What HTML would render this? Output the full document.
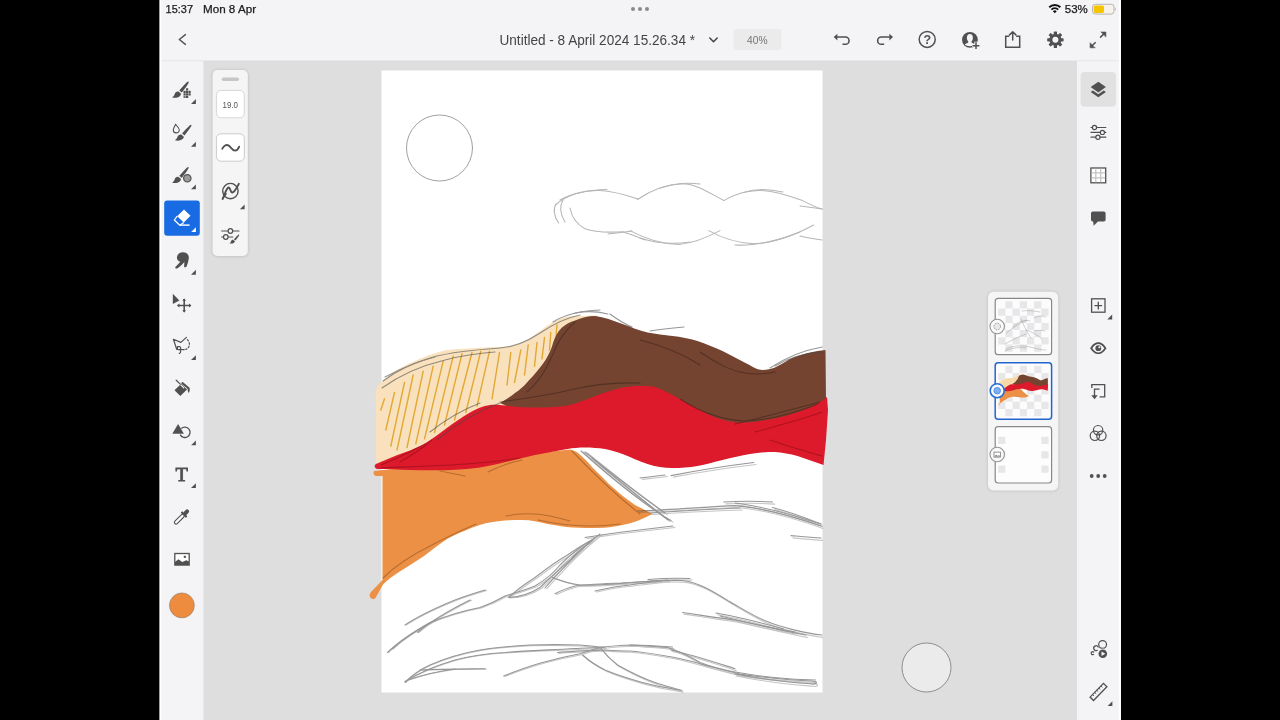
<!DOCTYPE html>
<html lang="en">
<head>
<meta charset="utf-8">
<title>Untitled - 8 April 2024 15.26.34</title>
<style>
html,body{margin:0;padding:0;background:#000;width:1280px;height:720px;overflow:hidden}
svg{display:block;position:absolute;left:0;top:0}
text{font-family:"Liberation Sans",sans-serif}
</style>
</head>
<body>
<svg width="1280" height="720" viewBox="0 0 1280 720">
<defs>
<filter id="sh" x="-20%" y="-20%" width="140%" height="140%"><feGaussianBlur stdDeviation="1.5"/></filter>
<clipPath id="cv"><rect x="381.5" y="70.5" width="441.5" height="622"/></clipPath>
</defs>
<!-- app background -->
<rect x="159.700" y="0" width="961.200" height="720" fill="#dedede"/>
<!-- CANVAS -->
<g id="canvas">
<rect x="381.5" y="70.5" width="441" height="622" fill="#fff"/>
<g id="art">
<!-- cream -->
<path d="M375.800,392 C376.500,387 379,384 382,381.500 C392,373 401,366.500 412,362.500 C422,357.500 434,353 447,350 C457,349 470,348.500 485,347.500 C497,347 506,347 515,345 C523,342 529,339 535,335 C541,331 546,326 552.500,322.500 C560,318 567,316.500 575,316 L598,315.500 L600,330 L520,400 L380,466 L376,462 Z" fill="#f8e1bc"/>
<!-- hatch -->
<g stroke="#e0a62c" stroke-width="1.400" fill="none" stroke-linecap="round" opacity=".95">
<path d="M384.5,398.8 L380.8,410.0"/><path d="M394.5,392.5 L385.8,430.0"/><path d="M404.5,382.5 L390.8,446.2"/><path d="M413.2,375.0 L397.0,450.0"/><path d="M423.2,371.2 L407.0,447.5"/><path d="M433.2,366.2 L415.8,443.8"/><path d="M443.2,361.2 L424.5,438.8"/><path d="M453.2,356.2 L434.5,432.5"/><path d="M462.0,353.8 L444.5,425.0"/><path d="M472.0,352.5 L454.5,420.0"/><path d="M480.8,351.2 L465.8,412.5"/><path d="M489.5,351.2 L477.0,406.2"/><path d="M499.5,352.5 L492.0,398.8"/><path d="M510.8,352.5 L507.0,385.0"/><path d="M520.8,350.0 L514.5,382.5"/><path d="M528.2,345.0 L524.5,375.0"/><path d="M537.0,342.5 L534.5,366.2"/><path d="M544.5,337.5 L542.0,358.8"/><path d="M550.8,332.5 L549.5,350.0"/><path d="M557.0,325.0 L555.8,340.0"/>
</g>
<!-- orange -->
<path d="M374.500,471 L383,470 L570,449.500 C573,450 575,451 577.500,452.500 C583,457 588,462 592.500,467.500 C598,473 604,479 610,485 C618,492 626,499 635,505 C641,508 647,511 652.500,514 C643,519 633,523 622.500,525 C614,527 606,528 597.500,528 C589,528 581,528 572.500,527.500 C564,527 556,525 547.500,524 C539,522 531,520 522.500,520 C515,520 507,520 500,521 C490,522 481,524 472.500,527.500 C464,531 455,534.500 447.500,538.750 C439,544 431,551 423.750,556.250 C415,562 406,567.500 397.500,573 C392,576.500 387,580.500 383,584.500 L375.500,598 C374,600 371,599 370,597 C369,595 370,593 372,591 L382.500,580 L382.500,476 L376,476 C373,476 373,471 374.500,471 Z" fill="#ec9045"/>
<!-- brown -->
<path d="M595,316 C604,317 613,320.500 622.500,324 C631,327 639,330.500 647.500,332.500 C656,334 664,335 672.500,336 C681,337 689,338.500 697.500,341 C706,344 714,347 722.500,351 C731,355 739,360 747.500,364 C753,367 758,370 762.500,370 C767,370 771,369 775,367.500 C780,365 785,362 790,359 C797,356 803,354 810,352.500 C815,351.500 820,350.500 825.500,350 L826,399 L810,430 L560,430 L500,403 C505,400 510,397 515,393 C520,389.500 524,386 527,382.500 C532,377 535,374 538,370 C542,365 545,361 547,357.500 C550,352 552,347 553,343 C555,337 558,331 562,327.500 C566,324 570,322 575,320.500 C581,318 588,316 595,316 Z" fill="#744431"/>
<!-- red -->
<path d="M376,464 C383,461 390,458 397.500,455 C406,452 414,449 422.500,445 C431,440 439,434 447.500,427.500 C455,422 462,417 470,412.500 C476,409 483,406 490,405 C497,404.500 503,405.500 510,406 C518,407 526,407.500 535,407.500 C545,407.500 555,407.500 565,406 C572,405 578,402 585,400 C593,397 601,393.500 610,391 C618,388.500 626,386.500 635,386 L650,386 C656,387 662,389.500 667.500,392.500 C672,394.500 676,397 680,399 C687,403 693,407 700,410 C707,414 713,417 720,419 C727,421 733,422.500 740,422.500 C747,422.500 753,422 760,421 C769,420 777,418 785,416 C794,413.500 802,410.500 810,407.500 C816,405 822,401 827,397 L828,410 L826,440 L823.500,465 C815,462 806,459 797.500,456 C790,454 782,452.500 775,452 C767,452 758,452.500 750,454 C741,455.500 732,457.500 722.500,460 C714,462 706,464.500 697.500,466 C689,467.500 681,468 672.500,468 C664,468 655,466.500 647.500,464 C639,461 631,457.500 622.500,454 C617,452 611,450 605,449 C598,448 592,447.500 585,447.500 C579,447.500 573,448 567.500,449 C556,451 546,453 535,455 C522,458 510,461 497.500,464 C485,467 472,469 460,469.500 C443,470.500 427,470.500 410,470 C399,469.500 387,469 378,469 C374,469 374,465 376,464 Z" fill="#dc1a2b"/>
</g>
<g id="sketch" fill="none" stroke="#4a4a4a" stroke-width="1.100" stroke-linecap="round" opacity=".58" clip-path="url(#cv)">
<!-- sun -->
<circle cx="439.500" cy="148" r="33" stroke-width="0.9"/>
<!-- cloud -->
<g opacity=".7" stroke-width="1.050">
<path d="M555.500,205 C566,195 584,190 600,190.500 C614,191 626,195 638,199"/>
<path d="M560,200 C572,193 588,190 607,189.500"/>
<path d="M637.500,199.500 C650,191 666,184.500 682.500,183.800 C697,184 711,194 724,200.600"/>
<path d="M660,188 C672,184 686,182 700,184"/>
<path d="M723.700,200.600 C735,194 748,190 761,190.500 C775,191 790,196 802.500,200.600 C809,204 815,207 822,209"/>
<path d="M745,192 C757,188 770,189 783,192"/>
<path d="M800,206 C808,207 815,208 822,209"/>
<path d="M558.700,223 C554,217 553,209 556,204"/>
<path d="M565,222 C560,214 559,207 563,200"/>
<path d="M570,208 C572,218 578,225 585,228.700 C597,233 610,232.500 622.500,231.700 C631,234 638,237 645,240"/>
<path d="M608,234 C617,233 625,232 632,231"/>
<path d="M630,230.600 C642,237 660,244 678.700,244.500 C694,243 708,237 720,230.600"/>
<path d="M640,238 C655,243 670,245 690,242"/>
<path d="M708.700,230.600 C722,238 738,243 753.700,243.700 C775,243 797,234 813.700,225"/>
<path d="M735,245 C755,246 780,240 800,232"/>
<path d="M800,236 C808,238 815,239 822,240"/>
</g>
<!-- outline along cream / brown top -->
<path d="M383,381 C395,372 410,364 430,358 C450,352 475,350 500,348 C515,347 528,341 540,333 C552,325 565,318 580,315"/>
<path d="M382,388 C400,375 420,366 445,360 C460,356 480,353 495,352"/>
<path d="M385,377 C400,369 415,362 435,357"/>
<path d="M553,322 C565,314 580,311 600,310"/>
<path d="M575,313 C590,310 600,312 608,314"/>
<path d="M527,392 C538,383 546,370 552,356 C557,343 563,332 575,322" stroke="#3a2a22"/>
<path d="M610,314 C618,320 625,324 632,327"/>
<path d="M650,331 C662,329 673,328 684,327"/>
<path d="M770,368 C785,358 800,351 822,347"/>
<path d="M775,366 C790,357 806,353 822,352"/>
<path d="M437,440 C455,425 475,412 500,403"/>
<path d="M430,432 C445,420 462,410 480,403"/>
<!-- lines inside shapes (darker) -->
<g stroke="#2b1a14" opacity=".75">
<path d="M500,402 C520,399 545,396 570,390 C590,385 610,382 640,383"/>
<path d="M680,399 C700,412 720,420 745,421 C770,420 795,413 818,404"/>
<path d="M700,352 C715,362 728,370 745,373 C755,375 765,374 775,372"/>
<path d="M640,340 C660,345 680,352 700,365"/>
<path d="M735,424 C760,418 790,410 820,402"/>
</g>
<g stroke="#7a0d16" opacity=".8">
<path d="M378,466 C395,460 410,452 425,444"/>
<path d="M400,462 C412,455 424,447 432,440"/>
<path d="M755,432 C780,425 800,420 822,412"/>
<path d="M770,440 C790,447 808,452 822,456"/>
<path d="M378,468 C420,466 470,466 520,458"/>
</g>
<g stroke="#7a4418" opacity=".8">
<path d="M383,578 C395,566 410,556 430,546 C445,538 460,531 476,524"/>
<path d="M506,516 C520,513 535,513 550,516 C560,518 565,520 570,521"/>
<path d="M538,520 C560,525 590,528 620,524"/>
<path d="M572,451 C590,470 612,492 640,514"/>
<path d="M440,471 C450,473 458,475 465,476"/>
<path d="M488,472 C500,466 512,462 522,460"/>
</g>
<g id="skb">
<!-- ridge from orange tip -->
<path d="M581,451 C600,468 625,490 656,511 C661,515 666,518 671,520.600"/>
<path d="M585,452 C610,472 635,492 665,513"/>
<path d="M592,458 C615,478 640,498 668,520"/>
<path d="M671,475.600 C700,470 725,466 753.700,462.500"/>
<path d="M640,478 C650,477 658,476 665,475"/>
<path d="M637.500,511 C670,510 705,507 735,505.600 C765,508 795,517 821,526"/>
<path d="M650,513 C680,511 710,509 740,508"/>
<path d="M723.700,502 C740,501 756,501 772.500,502"/>
<path d="M735,503 C760,506 790,514 821,524"/>
<path d="M772.500,507.500 C790,512 806,518 821,524"/>
<path d="M791,535.600 C801,536.500 811,537.500 821,538"/>
<!-- long loops -->
<path d="M673,526 C655,528 638,530 622.500,532 C608,534 596,536 585,537.500"/>
<path d="M508.750,597.500 C516,590 525,584 535,577.500 C546,569 557,561 567.500,555 C576,549 584,544 592.500,540 C584,547 576,553 570,560 C560,569 550,578 540,587.500 C530,594 520,597 508.750,597.500 Z"/>
<path d="M600,534 C588,543 578,553 568,563 C560,572 552,580 545,588"/>
<path d="M387.500,652.500 C400,640 415,631 430,622.500 C446,616 462,611 480,607.500 C490,604 498,600 505,596 C515,593 525,590 535,586 C545,580 553,574 560,565 C570,555 580,546 595,538"/>
<path d="M405,625 C420,615 438,607 455,600 C465,596 475,593 485,590"/>
<path d="M417.500,632.500 C432,620 450,610 470,600"/>
<path d="M392,649 C405,637 420,628 436,620"/>
<path d="M552.500,577.500 C561,581 570,583.500 580,585 C598,585.500 615,584 632,582.500 C652,581 668,580 682,580.500 C698,582 714,592 728,600.700 C741,608 752,615 764.500,620.600 C775,625 784,627.500 793,629.600 C803,632 812,634 822,635"/>
<path d="M555,593.750 C562,590 568,588 575,586 C590,584 606,583.500 622,583 C640,582 655,581 668,580"/>
<path d="M595,591 C607,588 618,586 630,585 C642,583 652,582 662,581"/>
<path d="M648,579.500 C660,578.500 675,578 690,578.500"/>
<path d="M682.500,612.500 C700,615 718,618 735,620 C760,625 783,631 806,635"/>
<path d="M716,613 C740,617 762,623 783.700,629"/>
<path d="M720,616 C745,622 770,628 795,632"/>
<!-- bottom loops -->
<path d="M405,682.500 C412,675 421,669 430,665 C446,658 463,653 480,650 C497,647 513,646 530,645 C547,644.500 563,644.500 580,645 C588,645.500 597,646.500 605,647.500"/>
<path d="M405,681.500 C420,672 438,665 455,660 C470,656 488,653.500 505,652.500 C528,650.500 550,650 575,648.500 C585,648 593,647.500 600,647.500 C610,646 620,645.500 630,645 C645,645 660,646 672.500,647"/>
<path d="M408,680 C425,674 440,671 455,669"/>
<path d="M420,670 C442,669 463,669 485,668.750"/>
<path d="M503.750,676 C516,671 530,666 542.500,662.500 C555,659 568,656 580,653.750 C588,651 595,649 602,647"/>
<path d="M557.500,652.500 C573,651 590,650.500 605,650 C613,650.500 622,651 630,651 C643,652 655,654 667.500,656.250 C680,658 690,661 700,663.750 C715,668 728,671 740,674 C765,678 790,680 812,681 C820,682 816,685 810,683.700 C785,682 760,679 735,674"/>
<path d="M582.500,655 C589,661 597,666 605,670 C617,675 630,679 642.500,682.500 C655,686 668,688.500 680,690"/>
<path d="M600,647.500 C605,654 611,660 617.500,665 C630,672 642,678 655,682.500 C662,685 670,687 682,690.500"/>
<path d="M630,645 C643,645.500 655,646.500 667.500,647.500 C680,651 690,657 700,662.500 C712,667 724,670 735,672 C762,677 790,679.500 815.600,680"/>
<path d="M671,650 C693,655 714,662 735,668.700"/>
</g>
<use href="#skb" transform="translate(1.6,1.1) rotate(0.35 600 600)" opacity=".55"/>
</g>

</g>
<!-- top bar -->
<rect x="159.700" y="0" width="961.200" height="61" fill="#f4f4f6"/>
<rect x="159.700" y="60.400" width="961.200" height="1" fill="#dcdcde" opacity=".7"/>
<!-- left toolbar -->
<rect x="159.700" y="61.200" width="43.700" height="659" fill="#f4f4f6"/>
<rect x="159.700" y="0" width="1.700" height="720" fill="#fff"/>
<!-- right toolbar -->
<rect x="1077" y="61.200" width="43.900" height="659" fill="#f4f4f6"/>
<rect x="1118.900" y="0" width="2" height="720" fill="#fff"/>
<!-- ===== status bar ===== -->
<g id="status" fill="#1a1a1a">
<text x="165.600" y="12.600" font-size="11" textLength="27.400" lengthAdjust="spacingAndGlyphs" stroke="#1a1a1a" stroke-width=".25">15:37</text>
<text x="203" y="12.600" font-size="11" textLength="53" lengthAdjust="spacingAndGlyphs" stroke="#1a1a1a" stroke-width=".25">Mon 8 Apr</text>
<circle cx="633" cy="9" r="2" fill="#8a8a8c"/><circle cx="640" cy="9" r="2" fill="#8a8a8c"/><circle cx="647" cy="9" r="2" fill="#8a8a8c"/>
<!-- wifi -->
<g fill="none" stroke="#111" stroke-width="1.900" stroke-linecap="butt">
<path d="M1049.200,7.300 A8,8 0 0 1 1060.400,7.300"/>
<path d="M1051.400,9.600 A4.900,4.900 0 0 1 1058.200,9.600"/>
</g>
<path d="M1054.800,13.200 L1052.900,11.300 A2.700,2.700 0 0 1 1056.700,11.300 Z" fill="#111"/>
<text x="1064.800" y="12.600" font-size="11" textLength="23" lengthAdjust="spacingAndGlyphs" stroke="#1a1a1a" stroke-width=".25">53%</text>
<!-- battery -->
<rect x="1092.500" y="4.300" width="21.500" height="9.800" rx="2.800" fill="#f8f3ea" stroke="#b5b5b5" stroke-width="1"/>
<rect x="1093.700" y="5.500" width="10.300" height="7.400" rx="1.600" fill="#f7c400"/>
<path d="M1114.800,7.600 C1116.200,8 1116.200,10.400 1114.800,10.800 Z" fill="#b5b5b5"/>
</g>
<!-- ===== title bar ===== -->
<g id="titlebar">
<path d="M185.400,34.600 L179.300,39.500 L185.400,44.400" fill="none" stroke="#555" stroke-width="1.500" stroke-linecap="round" stroke-linejoin="round"/>
<text x="499.500" y="45.300" font-size="13.900" fill="#444" textLength="195.500" lengthAdjust="spacingAndGlyphs">Untitled - 8 April 2024 15.26.34 *</text>
<path d="M709.800,38 L713.500,41.800 L717.200,38" fill="none" stroke="#444" stroke-width="1.500" stroke-linecap="round" stroke-linejoin="round"/>
<rect x="733.500" y="29" width="48" height="21" rx="3.500" fill="#ebebeb"/>
<text x="757.300" y="44" font-size="10.500" fill="#757575" text-anchor="middle" textLength="20.500" lengthAdjust="spacingAndGlyphs">40%</text>
</g>
<g id="topicons" fill="none" stroke="#505050" stroke-width="1.500" stroke-linecap="round" stroke-linejoin="round">
<!-- undo -->
<path d="M837,37 L845.400,37 A3.650,3.650 0 0 1 845.400,44.300 L842.500,44.300" stroke-width="1.600" stroke-linecap="butt"/>
<path d="M833.700,37.100 L837.400,33.700 L837.400,40.500 Z" fill="#505050" stroke="none"/>
<!-- redo -->
<path d="M889.700,37 L881.300,37 A3.650,3.650 0 0 0 881.300,44.300 L884.200,44.300" stroke-width="1.600" stroke-linecap="butt"/>
<path d="M893,37.100 L889.300,33.700 L889.300,40.500 Z" fill="#505050" stroke="none"/>
<!-- help -->
<circle cx="927.200" cy="39.400" r="8"/>
<!-- share -->
<path d="M1009.200,36.200 L1005.700,36.200 L1005.700,47.200 L1019.700,47.200 L1019.700,36.200 L1016.200,36.200" stroke-linecap="butt" stroke-linejoin="miter"/>
<path d="M1012.700,40 L1012.700,32.200 M1009.500,34.900 L1012.700,31.700 L1015.900,34.900"/>
<!-- fullscreen -->
<path d="M1100.100,37.600 L1104,33.800" stroke-linecap="butt"/>
<path d="M1095.700,42.200 L1091.800,46" stroke-linecap="butt"/>
<path d="M1101.200,32 L1105.900,32 L1105.900,36.700 Z M1090.100,43.100 L1090.100,47.800 L1094.800,47.800 Z" fill="#505050" stroke-width=".6"/>
</g>
<text x="927.200" y="43.900" font-size="12.500" font-weight="bold" fill="#505050" text-anchor="middle">?</text>
<!-- user+ -->
<g id="userplus">
<circle cx="969.900" cy="39.800" r="7.900" fill="#505050"/>
<path d="M969.900,34 C971.800,34 972.900,35.700 972.900,37.800 C972.900,39.400 972.300,40.700 971.500,41.500 C971.400,42.300 971.700,42.800 972.400,43.100 C973.600,43.500 974.500,44 975.100,44.600 C973.800,45.800 972,46.300 969.900,46.300 C967.800,46.300 966,45.800 964.700,44.600 C965.300,44 966.200,43.500 967.400,43.100 C968.100,42.800 968.400,42.300 968.300,41.500 C967.500,40.700 966.900,39.400 966.900,37.800 C966.900,35.700 968,34 969.900,34 Z" fill="#f4f4f6"/>
<path d="M976,41.800 L976,49.400 M972.200,45.650 L979.800,45.650" stroke="#f4f4f6" stroke-width="3.400" fill="none" stroke-linecap="butt"/>
<path d="M976,42.300 L976,49.100 M972.600,45.650 L979.400,45.650" stroke="#505050" stroke-width="1.500" fill="none" stroke-linecap="butt"/>
</g>
<!-- gear -->
<g id="gear" transform="translate(1055.400,39.800)">
<g fill="#505050">
<rect x="-1.600" y="-8.200" width="3.200" height="16.400" rx=".6"/>
<rect x="-1.600" y="-8.200" width="3.200" height="16.400" rx=".6" transform="rotate(45)"/>
<rect x="-1.600" y="-8.200" width="3.200" height="16.400" rx=".6" transform="rotate(90)"/>
<rect x="-1.600" y="-8.200" width="3.200" height="16.400" rx=".6" transform="rotate(135)"/>
<circle r="6"/>
</g>
<circle r="3" fill="#f4f4f6"/>
</g>

<g id="lefticons" fill="#505050">
<!-- 1 pixel brush -->
<path d="M188.200,81.600 C186.800,81.800 181.700,87.800 179.300,90.500 L181.800,92.600 C184,89.700 188.700,83.700 188.700,82.200 C188.700,81.800 188.500,81.600 188.200,81.600 Z"/>
<path d="M178.500,91.600 C176.500,91.300 175.200,92.400 174.600,94.200 C174.200,95.600 173.400,96.700 172.100,97.400 C174.500,98 177.700,97.900 179.500,96.400 C180.900,95.200 181.200,93.900 180.800,93.500 Z"/>
<g>
<rect x="186" y="88.300" width="2.200" height="2.200"/><rect x="183.500" y="90.800" width="2.200" height="2.200"/><rect x="186" y="90.800" width="2.200" height="2.200"/><rect x="188.500" y="90.800" width="2.200" height="2.200"/>
<rect x="183.500" y="93.300" width="2.200" height="2.200"/><rect x="186" y="93.300" width="2.200" height="2.200"/><rect x="188.500" y="93.300" width="2.200" height="2.200"/><rect x="186" y="95.800" width="2.200" height="2.200"/><rect x="183.500" y="95.800" width="2.200" height="2.200" opacity=".8"/>
</g>
<path d="M195.900,99 L195.900,103.900 L191,103.900 Z"/>
<!-- 2 live brush -->
<path d="M191,124.700 C189.600,124.900 184.500,130.700 182.100,133.400 L184.600,135.500 C186.800,132.600 191.500,126.800 191.500,125.300 C191.500,124.900 191.300,124.700 191,124.700 Z"/>
<path d="M181.300,134.500 C179.300,134.200 178,135.300 177.400,137.100 C177,138.500 176.200,139.600 174.900,140.300 C177.300,140.900 180.500,140.800 182.300,139.300 C183.700,138.100 184,136.800 183.600,136.400 Z"/>
<path d="M175.600,124.200 C177.300,126.600 179.300,128.300 179.300,129.900 A3,3 0 0 1 173.300,129.900 C173.300,128.300 174.600,126.600 175.600,124.200 Z" fill="none" stroke="#505050" stroke-width="1.100" stroke-linejoin="round"/>
<path d="M195.900,141.800 L195.900,146.700 L191,146.700 Z"/>
<!-- 3 vector brush -->
<path d="M188.200,166.900 C186.800,167.100 181.700,173.100 179.300,175.800 L181.800,177.900 C184,175 188.700,169 188.700,167.500 C188.700,167.100 188.500,166.900 188.200,166.900 Z"/>
<path d="M178.500,176.900 C176.500,176.600 175.200,177.700 174.600,179.500 C174.200,180.900 173.400,182 172.100,182.700 C174.500,183.300 177.700,183.200 179.500,181.700 C180.900,180.500 181.200,179.200 180.800,178.800 Z"/>
<circle cx="187.300" cy="178.300" r="3.700" fill="#9a9a9a" stroke="#505050" stroke-width="1.200"/>
<path d="M195.900,184.400 L195.900,189.300 L191,189.300 Z"/>
<!-- 4 eraser active -->
<rect x="164.200" y="200.500" width="35.600" height="35.300" rx="3" fill="#186be3"/>
<g fill="#fff">
<path d="M184,209.500 L190.500,215.700 L183.800,222.600 L177.200,216.200 Z"/>
<path d="M177.200,216.200 L174.300,220 L179.800,225.200 L183.800,222.600" fill="none" stroke="#fff" stroke-width="1.200" stroke-linejoin="round"/>
<rect x="179.800" y="224.400" width="9.800" height="1.400"/>
<path d="M195.900,227.200 L195.900,231.900 L191.200,231.900 Z"/>
</g>
<!-- 5 smudge -->
<path d="M177,258.600 C176.600,255 179,252.300 183,252.300 C186.800,252.300 189,254.800 188.800,258 C188.600,261.200 187.500,264 186.600,266.500 C186.200,267.600 184.300,267.600 184.100,266.400 L184.400,262 C182,264.600 179.500,267 177.200,268.400 C176,269 174.600,267.800 175.400,266.900 C177.200,265.300 179,263.500 180.300,261.800 C178.500,261.400 177.200,260.200 177,258.600 Z"/>
<path d="M195.900,269.800 L195.900,274.700 L191,274.700 Z"/>
<!-- 6 move -->
<path d="M172.800,293.800 L179.400,300.500 L172.800,304.100 Z"/>
<g stroke="#505050" stroke-width="1.600" fill="none" stroke-linecap="round" stroke-linejoin="round">
<path d="M178.200,305.500 L190.200,305.500 M184.200,299.600 L184.200,311.400"/>
</g>
<path d="M177,305.500 L179.400,303.600 L179.400,307.400 Z M191.400,305.500 L189,303.600 L189,307.400 Z M184.200,298.400 L182.300,300.800 L186.100,300.800 Z M184.200,312.600 L182.300,310.200 L186.100,310.200 Z"/>
<!-- 7 lasso -->
<g stroke="#505050" stroke-width="1.200" fill="none" stroke-linecap="round" stroke-linejoin="round">
<path d="M186.400,337.400 L180.900,342.400 L173.400,339.300 L176.700,349.300 L184.200,349.600"/>
<path d="M187.400,339.600 C189.600,342 190,345 188.600,347.200 C187.900,348.300 186.900,349 185.800,349.300" stroke-dasharray="1.500,2"/>
<path d="M177.400,346.600 L179.800,346.600 C180.800,347.400 181,348.800 180.200,349.600 L177.400,349.400 Z M180,349.600 C181.200,351.300 180.800,352.800 179.200,353.500"/>
</g>
<path d="M195.900,355.200 L195.900,360 L191,360 Z"/>
<!-- 8 fill bucket -->
<path d="M181.200,383.800 L187,389.400 L180.300,396 L174.500,390.200 Z"/>
<path d="M176.200,380.200 L181.600,385.400" stroke="#505050" stroke-width="1.200" fill="none" stroke-linecap="round"/>
<path d="M182.400,383.100 L188.600,388.200" stroke="#505050" stroke-width="2.100" fill="none" stroke-linecap="round"/>
<path d="M187.600,388 L189.500,388.300 C189.900,390 189.700,391.600 188.800,393 C187.800,391.700 187.500,389.800 187.600,388 Z"/>
<path d="M180.900,385 L183.800,387.900" stroke="#f4f4f6" stroke-width="1.100" fill="none" stroke-linecap="round"/>
<!-- 9 shapes -->
<path d="M178.100,424.100 L183.900,433.800 L172.300,433.800 Z"/>
<path d="M181.300,428.500 A5.200,5.200 0 1 1 180.200,434.600" fill="none" stroke="#505050" stroke-width="1.300"/>
<path d="M195.900,440.400 L195.900,445.200 L191.100,445.200 Z"/>
<!-- 10 text -->
<text x="181.700" y="480.800" font-size="19.600" text-anchor="middle" style="font-family:'Liberation Serif',serif" stroke="#505050" stroke-width=".8" stroke-linejoin="miter" textLength="12.400" lengthAdjust="spacingAndGlyphs">T</text>
<path d="M195.900,483.200 L195.900,488 L191,488 Z"/>
<!-- 11 eyedropper -->
<g transform="translate(175.600,522.800) rotate(-44.600)">
<rect x="-1" y="-1.650" width="12.600" height="3.300" rx="1.650" fill="#fff" stroke="#505050" stroke-width="1.100"/>
<rect x="10.800" y="-3.700" width="2.200" height="7.400" rx=".5"/>
<rect x="12" y="-2" width="6.200" height="4" rx="2"/>
</g>
<!-- 12 image -->
<rect x="174.800" y="553.500" width="14.400" height="11.600" fill="#fff" stroke="#505050" stroke-width="1.300"/>
<path d="M175,562 L178.400,559.200 L182.300,562 L186.300,560.300 L189,561.500 L189,565 L175,565 Z"/>
<rect x="183.800" y="555.800" width="2.100" height="2.100"/>
</g>
<!-- colour -->
<circle cx="181.900" cy="605.400" r="13.300" fill="#e9e9ea"/>
<circle cx="181.900" cy="605.400" r="12.400" fill="#ed8c3e" stroke="#8d7b6c" stroke-opacity=".55" stroke-width="1"/>

<g id="floatpanel">
<rect x="212.100" y="69.700" width="36.200" height="187" rx="5.500" fill="#000" opacity=".13" filter="url(#sh)"/>
<rect x="212.600" y="70" width="35.200" height="186" rx="5" fill="#f5f5f5"/>
<rect x="221.700" y="77.500" width="17.300" height="3.400" rx="1.700" fill="#c6c6c6"/>
<rect x="216.400" y="90.400" width="27.900" height="27.400" rx="4.500" fill="#fff" stroke="#d6d6d6" stroke-width="1"/>
<text x="230.300" y="107.900" font-size="9" fill="#555" text-anchor="middle" textLength="15.400" lengthAdjust="spacingAndGlyphs">19.0</text>
<rect x="216.400" y="133.800" width="27.900" height="27.400" rx="4.500" fill="#fff" stroke="#cbcbcb" stroke-width="1"/>
<path d="M222.200,148.800 C224,145.400 226.600,144 229,145.800 C231,147.300 232.500,150.600 235,150.600 C237,150.600 238.400,148.600 239.200,146.600" fill="none" stroke="#505050" stroke-width="1.800" stroke-linecap="round"/>
<!-- smoothing -->
<circle cx="230.400" cy="191.100" r="7.700" fill="none" stroke="#505050" stroke-width="1.400"/>
<path d="M222.600,199 C224.500,195 226,189 228.200,187.600 C230.200,186.600 230.300,192.800 232.300,192.500 C234.800,192 237,187.500 238.800,183.800" fill="none" stroke="#505050" stroke-width="1.900" stroke-linecap="round"/>
<path d="M222.200,199.600 C223,197 224.500,194.300 225.800,192.800 L227,193.800 C225.700,195.800 224.200,198 222.200,199.600 Z" fill="#505050"/>
<path d="M244.600,204.600 L244.600,209.300 L239.900,209.300 Z" fill="#505050"/>
<!-- brush settings -->
<g fill="none" stroke="#505050" stroke-width="1.200" stroke-linecap="round">
<path d="M221.700,231 L227.900,231 M232.900,231 L239,231"/>
<circle cx="230.400" cy="231" r="2.300" fill="#f5f5f5"/>
<path d="M221.700,237 L223.400,237 M228.300,237 L232.800,237"/>
<circle cx="225.800" cy="237" r="2.300" fill="#f5f5f5"/>
</g>
<path d="M238.900,234.500 C238,234.700 235.300,237.700 233.900,239.300 L235.300,240.500 C236.600,238.900 239.200,235.700 239.200,234.900 C239.200,234.600 239.100,234.500 238.900,234.500 Z" fill="#505050"/>
<path d="M233.300,239.900 C232,239.700 231.300,240.400 231,241.400 C230.800,242.200 230.300,242.900 229.500,243.300 C230.900,243.700 232.900,243.600 234,242.700 C234.800,242 235,241.200 234.700,241 Z" fill="#505050"/>
</g>

<g id="righticons" fill="#505050">
<rect x="1080.600" y="72" width="35.400" height="34.700" rx="4" fill="#e1e1e1"/>
<!-- layers -->
<path d="M1098.300,81.800 L1105.900,87.100 L1098.300,92.400 L1090.700,87.100 Z"/>
<path d="M1090.700,91.900 L1092.900,90.400 L1098.300,94.200 L1103.700,90.400 L1105.900,91.900 L1098.300,97.300 Z"/>
<!-- sliders -->
<g fill="none" stroke="#505050" stroke-width="1.200" stroke-linecap="round">
<path d="M1091,127.500 L1092.200,127.500 M1096.800,127.500 L1105.800,127.500"/>
<circle cx="1094.500" cy="127.500" r="2.100"/>
<path d="M1091,132.400 L1100.100,132.400 M1104.700,132.400 L1105.800,132.400"/>
<circle cx="1102.400" cy="132.400" r="2.100"/>
<path d="M1091,137.200 L1095.600,137.200 M1100.200,137.200 L1105.800,137.200"/>
<circle cx="1097.900" cy="137.200" r="2.100"/>
</g>
<!-- grid -->
<rect x="1090.900" y="168" width="14.800" height="14.800" fill="#fff" stroke="#505050" stroke-width="1.300"/>
<path d="M1095.800,168.600 L1095.800,182.200 M1100.700,168.600 L1100.700,182.200 M1091.500,172.900 L1105.100,172.900 M1091.500,177.800 L1105.100,177.800" stroke="#c4c4c4" stroke-width="1.200" fill="none"/>
<!-- comment -->
<path d="M1092.800,211.400 L1103.800,211.400 Q1105.600,211.400 1105.600,213.200 L1105.600,219.700 Q1105.600,221.500 1103.800,221.500 L1098,221.500 L1093.700,225.800 L1093.100,221.500 L1092.800,221.500 Q1091,221.500 1091,219.700 L1091,213.200 Q1091,211.400 1092.800,211.400 Z"/>
<!-- add layer -->
<rect x="1091.600" y="298.800" width="13.400" height="13.400" fill="none" stroke="#505050" stroke-width="1.300"/>
<path d="M1098.300,301.800 L1098.300,309.400 M1094.500,305.600 L1102.100,305.600" stroke="#505050" stroke-width="1.300" fill="none"/>
<path d="M1112.200,314.500 L1112.200,319.400 L1107.300,319.400 Z"/>
<!-- eye -->
<path d="M1090.100,348.200 C1093,343.800 1095.600,342.300 1098.300,342.300 C1101,342.300 1103.600,343.800 1106.500,348.200 C1103.600,352.600 1101,354.100 1098.300,354.100 C1095.600,354.100 1093,352.600 1090.100,348.200 Z M1092.300,348.200 C1094.400,351.200 1096.300,352.400 1098.300,352.400 C1100.300,352.400 1102.200,351.200 1104.300,348.200 C1102.200,345.200 1100.300,344 1098.300,344 C1096.300,344 1094.400,345.200 1092.300,348.200 Z" fill-rule="evenodd"/>
<circle cx="1098.300" cy="348.200" r="2.900"/>
<circle cx="1099.400" cy="347.200" r="1" fill="#f4f4f6"/>
<!-- clip -->
<g fill="none" stroke="#505050" stroke-width="1.300" stroke-linejoin="miter">
<path d="M1091.800,388 L1091.800,384.600 L1104.700,384.600 L1104.700,396.900 L1099.600,396.900"/>
<path d="M1099.600,389.200 L1094.500,389.200 L1094.500,396.500"/>
</g>
<path d="M1091.300,395.200 L1097.700,395.200 L1094.500,399.200 Z"/>
<!-- blend circles -->
<g fill="none" stroke="#505050" stroke-width="1.200">
<circle cx="1098.100" cy="430.200" r="4.700"/><circle cx="1094.900" cy="435.800" r="4.700"/><circle cx="1101.400" cy="435.800" r="4.700"/>
</g>
<!-- more -->
<circle cx="1091.700" cy="476" r="1.900"/><circle cx="1098.200" cy="476" r="1.900"/><circle cx="1104.700" cy="476" r="1.900"/>
<!-- bubbles / timelapse -->
<g fill="none" stroke="#505050" stroke-width="1.200" stroke-linecap="round">
<circle cx="1102.600" cy="644.500" r="3.900"/>
<path d="M1097.300,650.300 A2.400,2.400 0 1 1 1098.200,647"/>
<path d="M1093.500,654.400 A1.500,1.500 0 1 1 1093.700,652"/>
</g>
<circle cx="1102.800" cy="653.700" r="5.300" fill="#f4f4f6"/><circle cx="1102.800" cy="653.700" r="4.300"/>
<path d="M1101.500,651.400 L1105.400,653.700 L1101.500,656 Z" fill="#f4f4f6"/>
<!-- ruler -->
<g transform="translate(1098.500,691.900) rotate(-46)">
<rect x="-9.600" y="-2.400" width="19.200" height="4.800" fill="none" stroke="#505050" stroke-width="1.300"/>
<path d="M-6,-2.400 L-6,-.4 M-3,-2.400 L-3,-.4 M0,-2.400 L0,-.4 M3,-2.400 L3,-.4 M6,-2.400 L6,-.4" stroke="#505050" stroke-width=".9" fill="none"/>
</g>
<path d="M1112.400,701.200 L1112.400,706 L1107.600,706 Z"/>
</g>

<g id="layers">
<rect x="987.600" y="291.400" width="71" height="199.500" rx="6" fill="#000" opacity=".12" filter="url(#sh)"/>
<rect x="988" y="291.800" width="70.200" height="198.600" rx="5.500" fill="#f5f5f5"/>
<defs>
<clipPath id="tc0"><rect x="998.2" y="301.3" width="50.4" height="50.4"/></clipPath>
<clipPath id="tc1"><rect x="998.2" y="365.8" width="50.4" height="50.4"/></clipPath>
<clipPath id="tc2"><rect x="998.2" y="429.6" width="50.4" height="50.4"/></clipPath>
</defs>
<rect x="995.2" y="298.3" width="56.4" height="56.4" rx="3" fill="#fcfcfc"/>
<path d="M1005.4,301.3h7.2v7.2h-7.2zM1019.8,301.3h7.2v7.2h-7.2zM1034.2,301.3h7.2v7.2h-7.2zM998.2,308.5h7.2v7.2h-7.2zM1012.6,308.5h7.2v7.2h-7.2zM1027.0,308.5h7.2v7.2h-7.2zM1041.4,308.5h7.2v7.2h-7.2zM1005.4,315.7h7.2v7.2h-7.2zM1019.8,315.7h7.2v7.2h-7.2zM1034.2,315.7h7.2v7.2h-7.2zM998.2,322.9h7.2v7.2h-7.2zM1012.6,322.9h7.2v7.2h-7.2zM1027.0,322.9h7.2v7.2h-7.2zM1041.4,322.9h7.2v7.2h-7.2zM1005.4,330.1h7.2v7.2h-7.2zM1019.8,330.1h7.2v7.2h-7.2zM1034.2,330.1h7.2v7.2h-7.2zM998.2,337.3h7.2v7.2h-7.2zM1012.6,337.3h7.2v7.2h-7.2zM1027.0,337.3h7.2v7.2h-7.2zM1041.4,337.3h7.2v7.2h-7.2zM1005.4,344.5h7.2v7.2h-7.2zM1019.8,344.5h7.2v7.2h-7.2zM1034.2,344.5h7.2v7.2h-7.2z" fill="#e7e7e9"/>
<g fill="none" stroke="#8f8f8f" stroke-width=".8" opacity=".5" stroke-linecap="round">
<path d="M1006.400,333 C1012,328 1020,323 1027,320 M1021,319 C1024,326 1028,334 1031,338 M1013,327 C1018,322 1024,319 1030,321 M1005,344 C1012,340 1020,336 1026,334 M1022,311 C1028,310 1034,311 1040,312 M1026,330 C1032,332 1038,335 1042,339 M1034,318 C1038,316 1042,315 1046,317 M1006,349 C1014,345 1024,345 1034,348 C1038,349 1042,350 1046,350 M1005,351 C1012,348 1018,347 1026,348 M1034,331 C1038,330 1042,330 1045,331"/>
</g>
<rect x="995.2" y="298.3" width="56.4" height="56.4" rx="3" fill="none" stroke="#888" stroke-width="1.200"/>
<rect x="995.2" y="362.8" width="56.4" height="56.4" rx="3" fill="#fcfcfc"/>
<path d="M1005.4,365.8h7.2v7.2h-7.2zM1019.8,365.8h7.2v7.2h-7.2zM1034.2,365.8h7.2v7.2h-7.2zM998.2,373.0h7.2v7.2h-7.2zM1012.6,373.0h7.2v7.2h-7.2zM1027.0,373.0h7.2v7.2h-7.2zM1041.4,373.0h7.2v7.2h-7.2zM1005.4,380.2h7.2v7.2h-7.2zM1019.8,380.2h7.2v7.2h-7.2zM1034.2,380.2h7.2v7.2h-7.2zM998.2,387.4h7.2v7.2h-7.2zM1012.6,387.4h7.2v7.2h-7.2zM1027.0,387.4h7.2v7.2h-7.2zM1041.4,387.4h7.2v7.2h-7.2zM1005.4,394.6h7.2v7.2h-7.2zM1019.8,394.6h7.2v7.2h-7.2zM1034.2,394.6h7.2v7.2h-7.2zM998.2,401.8h7.2v7.2h-7.2zM1012.6,401.8h7.2v7.2h-7.2zM1027.0,401.8h7.2v7.2h-7.2zM1041.4,401.8h7.2v7.2h-7.2zM1005.4,409.0h7.2v7.2h-7.2zM1019.8,409.0h7.2v7.2h-7.2zM1034.2,409.0h7.2v7.2h-7.2z" fill="#e7e7e9"/>
<g clip-path="url(#tc1)"><g transform="translate(998.500,374.500) scale(0.1086) translate(-371,-316)"><use href="#art"/></g></g>
<rect x="995.2" y="362.8" width="56.4" height="56.4" rx="3" fill="none" stroke="#2365cf" stroke-width="1.500"/>
<rect x="995.2" y="426.6" width="56.4" height="56.4" rx="3" fill="#fdfdfd"/>
<path d="M998.2,436.8h7.2v7.2h-7.2zM1041.4,436.8h7.2v7.2h-7.2zM998.2,451.2h7.2v7.2h-7.2zM1041.4,451.2h7.2v7.2h-7.2zM998.2,465.6h7.2v7.2h-7.2zM1041.4,465.6h7.2v7.2h-7.2z" fill="#e7e7e9"/>
<rect x="995.2" y="426.6" width="56.4" height="56.4" rx="3" fill="none" stroke="#888" stroke-width="1.200"/>
<circle cx="997.200" cy="326.500" r="7.200" fill="#fafafa" stroke="#959595" stroke-width="1.100"/>
<circle cx="997.200" cy="326.500" r="3.300" fill="#e9e9e9" stroke="#8a8a8a" stroke-width="1" stroke-dasharray="1.300,1.300"/>
<circle cx="997.200" cy="390.700" r="7" fill="#fafafa" stroke="#2a6fd8" stroke-width="1.600"/>
<circle cx="997.200" cy="390.700" r="3.300" fill="#7db0f3" stroke="#3f83e4" stroke-width=".8"/>
<circle cx="997.200" cy="454.500" r="7.200" fill="#fafafa" stroke="#959595" stroke-width="1.100"/>
<rect x="994" y="452.100" width="6.400" height="5" fill="#fff" stroke="#7a7a7a" stroke-width=".8"/><path d="M994.300,456.600 L996.100,454.700 L997.700,456.100 L999.100,455.100 L1000.100,456.600 Z" fill="#7a7a7a"/>
</g>

<!-- touch shortcut -->
<circle cx="926.500" cy="667.500" r="24.500" fill="#ebebec" stroke="#8c8c8c" stroke-width="1"/>

</svg>
</body>
</html>
